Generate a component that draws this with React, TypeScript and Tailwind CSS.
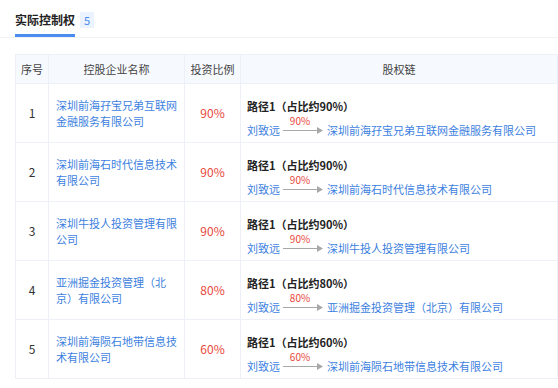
import React from "react";

type Row = {
  no: number;
  name: string;
  ratio: string;
};

const rows: Row[] = [
  { no: 1, name: "深圳前海孖宝兄弟互联网金融服务有限公司", ratio: "90%" },
  { no: 2, name: "深圳前海石时代信息技术有限公司", ratio: "90%" },
  { no: 3, name: "深圳牛投人投资管理有限公司", ratio: "90%" },
  { no: 4, name: "亚洲掘金投资管理（北京）有限公司", ratio: "80%" },
  { no: 5, name: "深圳前海陨石地带信息技术有限公司", ratio: "60%" },
];

const Arrow = ({ pct }: { pct: string }) => (
  <span className="relative inline-flex items-center ml-[3px] w-[40px] h-[10px]">
    <span className="absolute left-0 right-[6px] -top-[9px] text-center text-[10px] leading-[10px] text-[#e8483c]">{pct}</span>
    <span className="flex-1 h-px bg-[#a8a8a8]" />
    <svg width="6" height="7" viewBox="0 0 6 7" className="block">
      <path d="M0 0 L6 3.5 L0 7 Z" fill="#a8a8a8" />
    </svg>
  </span>
);

export default function App() {
  return (
    <div
      className="w-[558px] h-[388px] bg-white overflow-hidden text-[#333]"
      style={{ fontFamily: '"Microsoft YaHei", "Noto Sans CJK SC", sans-serif' }}
    >
      <div className="pl-[15px] pt-[11px] border-b border-[#f2f2f2] flex">
        <div className="flex items-start">
          <div className="border-b-[3px] border-[#4a8cf0] pb-[5px] text-[12px] leading-[18px] font-bold text-[#222]">
            实际控制权
          </div>
          <span className="ml-[5px] mt-[1px] px-[4px] h-[16px] leading-[16px] text-[11px] bg-[#ebf3ff] text-[#4a8cf0]">5</span>
        </div>
      </div>

      <table className="ml-[15px] mt-[16px] w-[543px] border-collapse table-fixed text-[11px]">
        <colgroup>
          <col className="w-[33px]" />
          <col className="w-[136px]" />
          <col className="w-[56px]" />
          <col />
        </colgroup>
        <thead>
          <tr className="bg-[#f6f9fd] h-[29px] text-[#444]">
            <th className="font-normal text-center border border-[#edf1f7]">序号</th>
            <th className="font-normal text-center border border-[#edf1f7]">控股企业名称</th>
            <th className="font-normal text-center border border-[#edf1f7]">投资比例</th>
            <th className="font-normal text-center border border-[#edf1f7]">股权链</th>
          </tr>
        </thead>
        <tbody>
          {rows.map((r) => (
            <tr key={r.no} className="h-[59px]">
              <td className="text-center border border-[#edf1f7] text-[12px]">{r.no}</td>
              <td className="border border-[#edf1f7] pl-[7px] pr-[6px] text-[#3d7fe0] leading-[16px]">{r.name}</td>
              <td className="text-center border border-[#edf1f7] text-[#e8483c] text-[12px]">{r.ratio}</td>
              <td className="border border-[#edf1f7] pl-[6px] align-top pt-[14px]">
                <div className="font-bold leading-[16px] text-[#222]">
                  路径1（占比约{r.ratio}）
                </div>
                <div className="mt-[8px] flex items-center whitespace-nowrap leading-[16px] text-[#3d7fe0]">
                  <span>刘致远</span>
                  <Arrow pct={r.ratio} />
                  <span className="ml-[4px]">{r.name}</span>
                </div>
              </td>
            </tr>
          ))}
        </tbody>
      </table>
    </div>
  );
}
